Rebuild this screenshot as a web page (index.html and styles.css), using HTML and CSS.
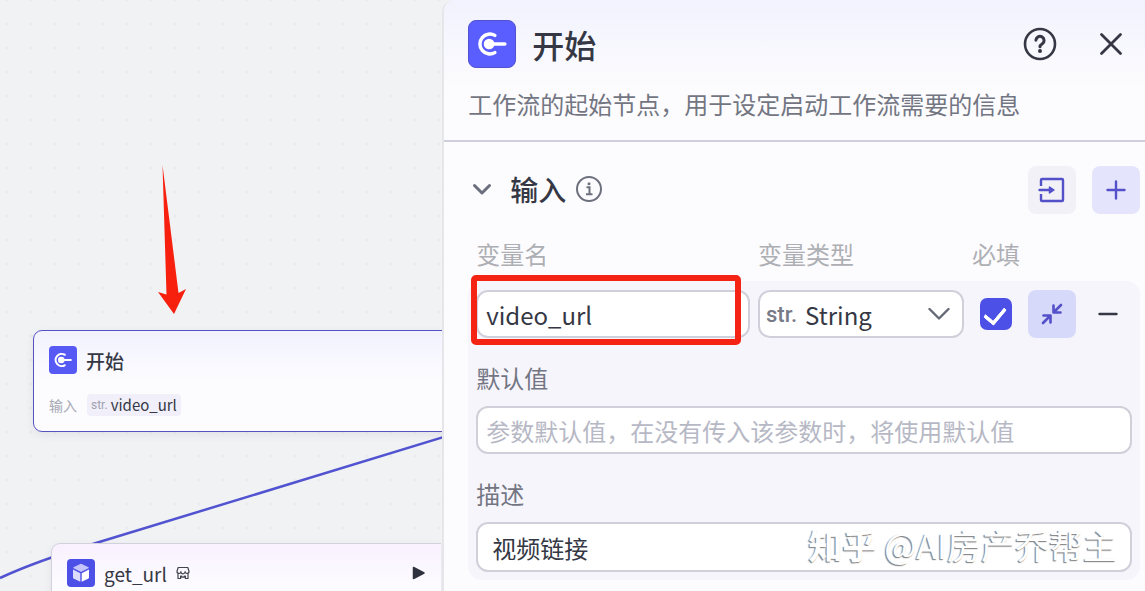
FILE: index.html
```html
<!DOCTYPE html>
<html lang="zh-CN">
<head>
    <meta charset="UTF-8">
    <meta name="viewport" content="width=device-width, initial-scale=1.0">
    <title>开始</title>
    <link rel="stylesheet" href="styles.css">
</head>
<body>
    <svg class="sprite" aria-hidden="true">
        <symbol id="icon-start" viewBox="0 0 48 48">
            <path d="M27 15A10.400 10.400 0 1 0 27 33" fill="none" stroke="#fff" stroke-width="3.600" stroke-linecap="round"/>
            <circle cx="21" cy="24" r="5.600" fill="#fff"/>
            <path d="M21 24h16.500" stroke="#fff" stroke-width="3.400" stroke-linecap="round"/>
        </symbol>
    </svg>

    <main class="canvas">
        <svg class="edges" width="480" height="600" aria-hidden="true">
            <path d="M0 578C30 564 60 554 96 543L470 429" fill="none" stroke="#5153d0" stroke-width="2.500"/>
        </svg>

        <section class="node node-start">
            <div class="node-head">
                <svg class="node-icon"><use href="#icon-start"/></svg>
                <span>开始</span>
            </div>
            <div class="node-params">
                <span>输入</span>
                <span class="tag"><span class="str">str.</span>video_url</span>
            </div>
        </section>

        <section class="node node-plugin">
            <div class="node-head">
                <svg class="node-icon" viewBox="0 0 28 28">
                    <path d="M14 5.200l7.400 3.500L14 12.400 6.600 8.700z" fill="#c5c5fb" stroke="#c5c5fb" stroke-linejoin="round"/>
                    <path d="M6 10.600l7.300 3.600v8.600L7 19.700q-1-.5-1-1.500z" fill="#dcdcff"/>
                    <path d="M22 10.600l-7.300 3.600v8.600L21 19.700q1-.5 1-1.500z" fill="#fff"/>
                </svg>
                <span>get_url</span>
                <svg class="store-icon" viewBox="0 0 14 14" fill="none" stroke="#41444f" stroke-width="1.200" stroke-linejoin="round">
                    <path d="M2.200 1.500h9.600l1.200 3.800a1.900 1.900 0 0 1-3.900.4 2.100 2.100 0 0 1-4.200 0A1.900 1.900 0 0 1 1 5.300z"/>
                    <path d="M2 7.500v5h2.600V10h1.200v1.200h2.400V10h1.200v2.500H12v-5"/>
                </svg>
                <button class="run" aria-label="运行">
                    <svg width="14" height="14" viewBox="0 0 14 14"><path d="M1.500 1.500l10.500 5.500-10.500 5.500z" fill="#2f323e" stroke="#2f323e" stroke-width="1.500" stroke-linejoin="round"/></svg>
                </button>
            </div>
        </section>

        <svg class="arrow" width="30" height="150" viewBox="0 0 30 150" aria-hidden="true">
            <path d="M4.500 0L20.500 128l7.500-4L16 149 0 127l8.500 2.500z" fill="#f7200f"/>
        </svg>
    </main>

    <aside class="panel">
        <header class="panel-head">
            <div class="title-row">
                <svg class="panel-icon"><use href="#icon-start"/></svg>
                <h1>开始</h1>
                <button class="plain" aria-label="帮助">
                    <svg width="34" height="34" viewBox="0 0 34 34" fill="none" stroke="#353844" stroke-width="2.600">
                        <circle cx="17" cy="17" r="15"/>
                        <path d="M12.900 13.200a4.100 4.100 0 1 1 6.400 3.600c-1.600 1-2.300 1.500-2.300 3" stroke-linecap="round" stroke-width="3"/>
                        <circle cx="17" cy="24" r="2" fill="#353844" stroke="none"/>
                    </svg>
                </button>
                <button class="plain" aria-label="关闭">
                    <svg width="24" height="24" viewBox="0 0 24 24"><path d="M2.500 2.500l19 19M21.500 2.500l-19 19" stroke="#353844" stroke-width="2.800" stroke-linecap="round"/></svg>
                </button>
            </div>
            <p>工作流的起始节点，用于设定启动工作流需要的信息</p>
        </header>

        <section class="inputs">
            <div class="section-row">
                <div class="section-title">
                    <svg width="20" height="14" viewBox="0 0 20 14"><path d="M2.500 3.500l7.500 7.500 7.500-7.500" fill="none" stroke="#6b6e7c" stroke-width="3" stroke-linecap="round" stroke-linejoin="round"/></svg>
                    <h2>输入</h2>
                    <svg class="info" width="26" height="26" viewBox="0 0 26 26" fill="none" stroke="#6d707d" stroke-width="2">
                        <circle cx="13" cy="13" r="12"/>
                        <path d="M10.500 11.200h3V18M10 18.200h6.500"/>
                        <circle cx="13" cy="7.800" r="1.500" fill="#6d707d" stroke="none"/>
                    </svg>
                </div>
                <button class="square import" aria-label="导入">
                    <svg width="28" height="28" viewBox="0 0 28 28" fill="none" stroke="#5350c9" stroke-width="2.400" stroke-linejoin="round">
                        <path d="M3 10V4q0-1 1-1h20q1 0 1 1v20q0 1-1 1H4q-1 0-1-1v-6"/>
                        <path d="M1.500 14H13" stroke-linecap="round"/>
                        <path d="M11.500 11L16 14l-4.500 3z" fill="#5350c9" stroke-width="1.500"/>
                    </svg>
                </button>
                <button class="square add" aria-label="添加">
                    <svg width="20" height="20" viewBox="0 0 20 20"><path d="M10 1.500v17M1.500 10h17" stroke="#5350c9" stroke-width="2.400" stroke-linecap="round"/></svg>
                </button>
            </div>

            <div class="columns column-names">
                <label for="name">变量名</label>
                <label for="type">变量类型</label>
                <label for="required">必填</label>
            </div>

            <div class="variable">
                <div class="columns">
                    <div class="name-field">
                        <input class="box" type="text" id="name" value="video_url">
                        <span class="highlight"></span>
                    </div>
                    <div class="box type-field">
                        <span class="str">str.</span>
                        <select id="type">
                            <option>String</option>
                        </select>
                        <svg width="22" height="14" viewBox="0 0 22 14"><path d="M1.500 2l9.500 9.500L20.500 2" fill="none" stroke="#666976" stroke-width="2.400" stroke-linecap="round" stroke-linejoin="round"/></svg>
                    </div>
                    <input type="checkbox" id="required" checked>
                    <button class="square collapse" aria-label="收起">
                        <svg width="22" height="22" viewBox="0 0 22 22" fill="none" stroke="#5350c9" stroke-width="2.600" stroke-linecap="round" stroke-linejoin="round">
                            <path d="M20 2l-7 7M12.500 2.500v7h7"/>
                            <path d="M2 20l7-7M2.500 12.500h7v7"/>
                        </svg>
                    </button>
                    <button class="square" aria-label="删除">
                        <svg width="20" height="4" viewBox="0 0 20 4"><path d="M1.500 2h17" stroke="#353844" stroke-width="2.400" stroke-linecap="round"/></svg>
                    </button>
                </div>

                <div class="field">
                    <label for="default">默认值</label>
                    <input class="box" type="text" id="default" placeholder="参数默认值，在没有传入该参数时，将使用默认值">
                </div>
                <div class="field">
                    <label for="desc">描述</label>
                    <input class="box desc" type="text" id="desc" value="视频链接">
                </div>
            </div>
        </section>
    </aside>

    <div class="watermark"><b>知乎</b> @AI房产乔帮主</div>
</body>
</html>
```
FILE: styles.css
```css
*{
    box-sizing: border-box;
}

body{
    margin: 0;
    height: 100vh;
    display: flex;
    overflow: hidden;
    color: #353844;
    background-color: #f1f2f4;
    font-family: "Noto Sans CJK SC", sans-serif;
}

h1, h2, p{
    margin: 0;
}

button, input, select{
    font-family: inherit;
    color: inherit;
}

button{
    display: flex;
    align-items: center;
    justify-content: center;
    padding: 0;
    border: none;
    background: none;
    cursor: pointer;
}

svg{
    flex: none;
}

.sprite{
    position: absolute;
    width: 0;
    height: 0;
}

.str{
    color: #777a87;
    font-family: Roboto, sans-serif;
    font-size: 22px;
    font-weight: 500;
}

/* canvas */
.canvas{
    flex: 443;
    min-width: 0;
    position: relative;
    overflow: hidden;
    background-image: radial-gradient(circle, #eaebee 1px, transparent 2px);
    background-size: 24px 24px;
    background-position: -5px -12px;
}

.edges{
    position: absolute;
    left: 0;
    top: 0;
}

.arrow{
    position: absolute;
    left: 158px;
    top: 165px;
}

.node{
    position: absolute;
    width: 480px;
    border-radius: 9px;
    box-shadow: 0 3px 8px rgba(50, 50, 90, 0.08);
}

.node-start{
    left: 33px;
    top: 330px;
    height: 102px;
    padding: 15px;
    border: 1px solid #5653c0;
    background: linear-gradient(#f2f2fe, #fcfcff 50%);
}

.node-plugin{
    left: 51px;
    top: 543px;
    width: 390px;
    height: 110px;
    padding: 15px;
    border: 1px solid #d2d1dc;
    border-right: none;
    border-radius: 9px 0 0 0;
    background: linear-gradient(#f9f1fe, #fcfbff 40px);
}

.node-head{
    display: flex;
    align-items: center;
    gap: 9px;
    height: 28px;
    font-size: 19px;
    font-weight: 500;
}

.node-plugin .node-head{
    font-weight: 400;
}

.node-icon{
    width: 28px;
    height: 28px;
    border-radius: 4px;
    background-color: #5659f4;
}

.node-plugin .node-icon{
    background-color: #4d50e6;
}

.store-icon{
    width: 14px;
    height: 14px;
}

.run{
    margin-left: auto;
}

.node-params{
    display: flex;
    align-items: center;
    gap: 10px;
    margin-top: 20px;
    font-size: 14px;
    line-height: 22px;
    color: #a5a7b3;
}

.tag{
    display: flex;
    gap: 3px;
    padding: 0 4px;
    border-radius: 4px;
    background-color: #f0effa;
    color: #353844;
    font-size: 15px;
}

.tag .str{
    color: #a0a2b0;
    font-size: 12px;
    font-weight: 400;
}

/* side panel */
.panel{
    flex: 702;
    min-width: 0;
    border-left: 2px solid #e5e5ea;
    border-top-left-radius: 12px;
    background-color: #fcfcfe;
    overflow: hidden;
}

.panel-head{
    padding: 20px 22px 20px 24px;
    border-bottom: 2px solid #cfcfdb;
    background: linear-gradient(#f2f2fe, #fcfcfe 90px);
}

.title-row{
    display: flex;
    align-items: center;
    gap: 16px;
    height: 48px;
}

.panel-icon{
    width: 48px;
    height: 48px;
    border: 1px solid #5351cf;
    border-radius: 8px;
    background-color: #5b5eff;
}

h1{
    flex: 1;
    font-size: 32px;
    font-weight: 500;
    line-height: 48px;
}

.plain + .plain{
    margin-left: 26px;
}

.panel-head p{
    margin-top: 20px;
    color: #737682;
    font-size: 24px;
    line-height: 32px;
    white-space: nowrap;
}

.inputs{
    padding: 24px 5px 0 24px;
}

.section-row{
    display: flex;
    align-items: center;
    gap: 16px;
}

.section-title{
    flex: 1;
    display: flex;
    align-items: center;
    gap: 10px;
    padding: 0 0 3px 4px;
}

h2{
    margin-left: 8px;
    font-size: 28px;
    font-weight: 500;
    line-height: 40px;
}

.square{
    width: 48px;
    height: 48px;
    border-radius: 8px;
}

.import{
    background-color: #f1f1f7;
}

.add{
    background-color: #e4e5fc;
}

.collapse{
    background-color: #d7d9fb;
}

.columns{
    display: grid;
    grid-template-columns: 1fr 206px 48px 48px 56px;
    column-gap: 8px;
    align-items: center;
}

.column-names{
    margin-top: 24px;
    padding-left: 8px;
    color: #aeafb4;
    font-size: 24px;
    line-height: 32px;
}

.variable{
    margin-top: 11px;
    padding: 9px 0 8px 8px;
    border-radius: 14px;
    background-color: #f6f5fc;
}

.box{
    width: 100%;
    height: 48px;
    padding: 0 8px;
    border: 2px solid #d0d0da;
    border-radius: 12px;
    outline: none;
    background-color: #fff;
    font-size: 24px;
}

.box::placeholder{
    color: #b6b8c5;
}

.name-field{
    position: relative;
}

/* red marker drawn over the name box */
.highlight{
    position: absolute;
    inset: -15px 9px -7px -5px;
    border: 6px solid #f52314;
    border-radius: 5px;
    pointer-events: none;
}

.name-field .box{
    display: block;
}

.type-field{
    display: flex;
    align-items: center;
    padding: 0 12px 0 6px;
}

.type-field select{
    flex: 1;
    min-width: 0;
    padding: 0 0 0 8px;
    border: none;
    outline: none;
    background: none;
    appearance: none;
    font-size: 24px;
}

input[type="checkbox"]{
    justify-self: center;
    width: 32px;
    height: 32px;
    margin: 0;
    appearance: none;
    border-radius: 7px;
    background-color: #4d50e6;
    display: grid;
    place-items: center;
}

input[type="checkbox"]:checked::before{
    content: "";
    width: 10px;
    height: 17px;
    margin: 0 2px 2px 0;
    border: solid #fff;
    border-width: 0 4px 4px 0;
    border-radius: 2px;
    transform: rotate(40deg);
}

.field{
    margin-right: 8px;
}

.field label{
    display: block;
    padding: 24px 0 12px;
    color: #737682;
    font-size: 24px;
    line-height: 32px;
}

.field .box{
    display: block;
}

.field .desc{
    height: 50px;
    padding: 0 14px;
}

.watermark{
    position: absolute;
    right: 28px;
    bottom: 22px;
    color: #fff;
    font-size: 34px;
    line-height: 48px;
    text-shadow: -1px 1px 1px #888, -1px 1px 1px #aaa;
    white-space: nowrap;
    pointer-events: none;
}
```
